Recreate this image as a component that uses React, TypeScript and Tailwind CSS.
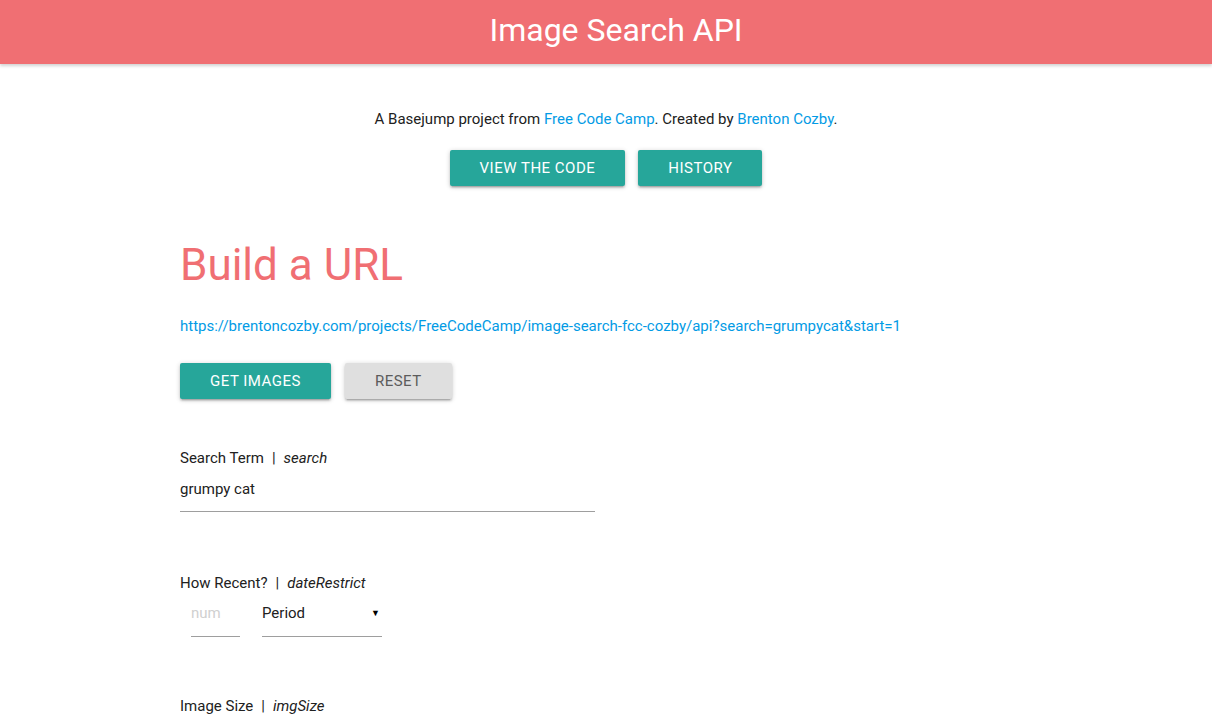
import React from "react";

const shadow =
  "shadow-[0_2px_2px_0_rgba(0,0,0,0.14),0_3px_1px_-2px_rgba(0,0,0,0.12),0_1px_5px_0_rgba(0,0,0,0.2)]";

const Btn = ({ label, gray }: { label: string; gray?: boolean }) => (
  <button
    className={`h-9 px-[30px] rounded-[2px] text-[15px] tracking-[0.5px] uppercase ${shadow} ${
      gray ? "bg-[#dfdfdf] text-[#5c5c5c]" : "bg-[#26a69a] text-white"
    }`}
  >
    {label}
  </button>
);

const Label = ({ name, param }: { name: string; param: string }) => (
  <p className="text-[15px] leading-[22px] text-[#212121]">
    {name}
    <span className="mx-[8px]">|</span>
    <em>{param}</em>
  </p>
);

const App = () => {
  return (
    <div className="min-h-screen bg-white text-[#212121] font-['Roboto',sans-serif]">
      <header className="h-16 bg-[#f06f73] flex items-center justify-center shadow-[0_2px_3px_rgba(0,0,0,0.18)]">
        <h1 className="text-white text-[32px] leading-none -mt-[4px] ml-[20px]">Image Search API</h1>
      </header>

      <p className="mt-[44px] text-center text-[15px] leading-[22px]">
        A Basejump project from <a className="text-[#039be5]">Free Code Camp</a>. Created by{" "}
        <a className="text-[#039be5]">Brenton Cozby</a>.
      </p>
      <div className="mt-[20px] flex justify-center gap-[13px]">
        <Btn label="View the code" />
        <Btn label="History" />
      </div>

      <main className="w-[852px] mx-auto">
        <h2 className="mt-[53px] text-[44px] leading-[52px] text-[#f06f73]">Build a URL</h2>
        <a className="block mt-[24px] text-[15px] leading-[22px] text-[#039be5]">
          https://brentoncozby.com/projects/FreeCodeCamp/image-search-fcc-cozby/api?search=grumpycat&amp;start=1
        </a>
        <div className="mt-[26px] flex gap-[14px]">
          <Btn label="Get images" />
          <Btn label="Reset" gray />
        </div>

        <div className="mt-[48px]">
          <Label name="Search Term" param="search" />
          <div className="mt-[9px] w-[415px] border-b border-[#9e9e9e] pb-[11px] text-[15px] leading-[22px]">
            grumpy cat
          </div>
        </div>

        <div className="mt-[60px]">
          <Label name="How Recent?" param="dateRestrict" />
          <div className="mt-[8px] flex">
            <div className="ml-[11px] w-[49px] border-b border-[#9e9e9e] pb-[12px] text-[15px] leading-[22px] text-[#d0d0d0]">
              num
            </div>
            <div className="ml-[22px] w-[120px] border-b border-[#9e9e9e] pb-[12px] text-[15px] leading-[22px] flex justify-between items-center">
              <span>Period</span>
              <span className="text-[9px] mr-[2px] text-black">▼</span>
            </div>
          </div>
        </div>

        <div className="mt-[58px]">
          <Label name="Image Size" param="imgSize" />
        </div>
      </main>
    </div>
  );
};

export default App;
